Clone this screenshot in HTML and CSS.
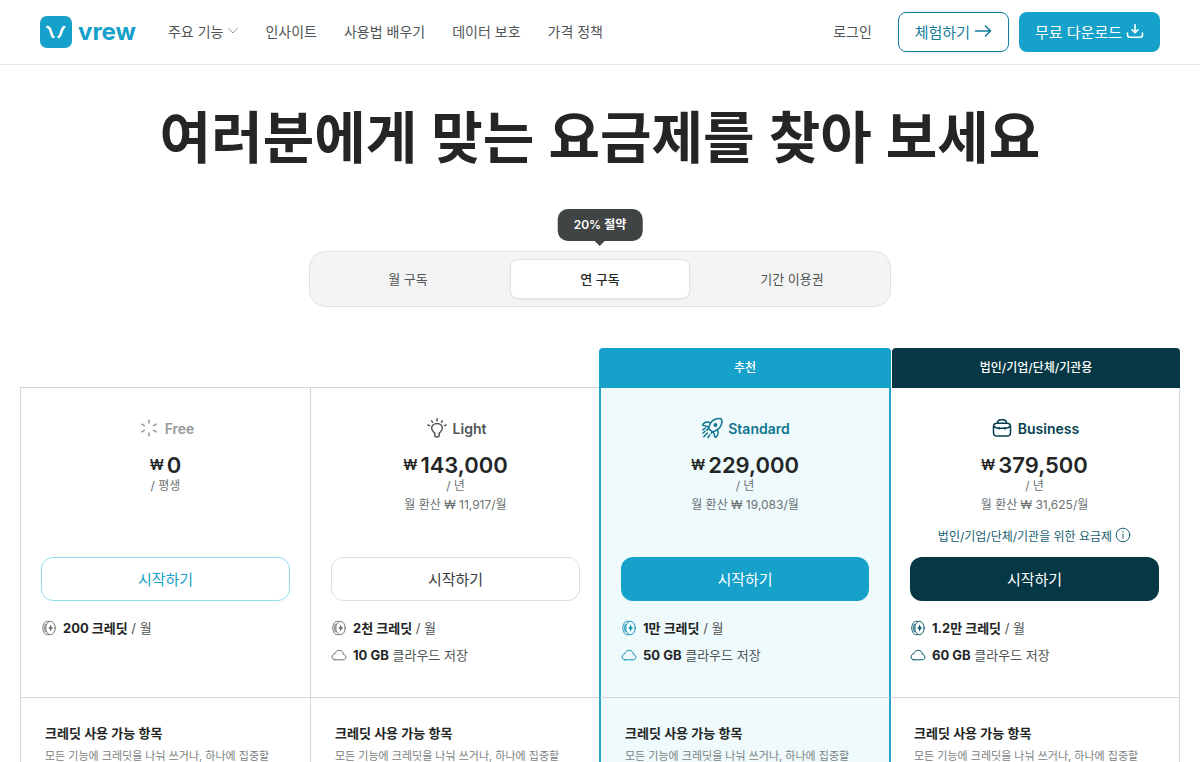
FILE: index.html
```html
<!DOCTYPE html>
<html lang="ko">
<head>
    <meta charset="UTF-8">
    <meta name="viewport" content="width=device-width, initial-scale=1">
    <title>Vrew 가격 정책</title>
    <link rel="stylesheet" href="styles.css">
</head>
<body>
<!-- 공용 아이콘 -->
<svg class="defs" width="0" height="0">
    <symbol id="coin" viewBox="0 0 16 16">
        <ellipse cx="9.500" cy="8" rx="4.700" ry="6.700"/>
        <path d="M7.500 1.300H6.500C3.900 1.300 1.800 4.300 1.800 8s2.100 6.700 4.700 6.700h1M4.200 4.300c-.7 2.200-.7 5.200 0 7.400"/>
        <path class="fill" d="M9.700 4.300l.9 2.700 1.700 1-1.700 1-.9 2.700L8.800 9l-1.700-1 1.700-1z"/>
    </symbol>
    <symbol id="cloud" viewBox="0 0 16 16">
        <path d="M3.900 12.800h8.300c1.500 0 2.700-1.100 2.700-2.600 0-1.400-1-2.500-2.400-2.600C12.300 5 10.500 3.300 8.200 3.300 6 3.300 4.300 4.700 3.800 6.900 2.200 7 1.100 8.300 1.100 9.900c0 1.700 1.200 2.900 2.800 2.900z"/>
    </symbol>
</svg>

<!-- 헤더 -->
<header class="header">
    <a class="logo" href="#">
        <svg width="32" height="32" viewBox="0 0 32 32">
            <rect width="32" height="32" rx="7" fill="#15a1c9"/>
            <path d="M7.500 11c2.300.2 2.900 2.800 3.600 5.200.6 2.200 1 4.300 2.400 4.800M24.300 11c-1.700.6-2.400 3.200-3.100 5.300-.6 2-1.200 4-2.400 4.700" fill="none" stroke="#fff" stroke-width="2.600" stroke-linecap="round"/>
        </svg>
        <span>vrew</span>
    </a>
    <nav class="nav">
        <a href="#">주요 기능
            <svg width="10" height="10" viewBox="0 0 10 10"><path d="M.8 2.500L5 7l4.200-4.500"/></svg>
        </a>
        <a href="#">인사이트</a>
        <a href="#">사용법 배우기</a>
        <a href="#">데이터 보호</a>
        <a href="#">가격 정책</a>
    </nav>
    <div class="actions">
        <a class="login" href="#">로그인</a>
        <button class="btn-try">체험하기
            <svg width="18" height="18" viewBox="0 0 18 18"><path d="M1.500 9h15M11.500 4l5 5-5 5"/></svg>
        </button>
        <button class="btn-down">무료 다운로드
            <svg width="18" height="18" viewBox="0 0 18 18"><path d="M9 2.500v8M6 7.700l3 3 3-3M1.500 11v1.800c0 1.500.9 2.400 2.400 2.400h10.200c1.500 0 2.400-.9 2.400-2.400V11"/></svg>
        </button>
    </div>
</header>

<main>
    <h1>여러분에게 맞는 요금제를 찾아 보세요</h1>

    <!-- 구독 기간 선택 -->
    <div class="period">
        <button>월 구독</button>
        <button class="on">연 구독</button>
        <button>기간 이용권</button>
        <span class="tip">20% 절약</span>
    </div>

    <!-- 요금제 -->
    <div class="plans">
        <article class="plan free">
            <div class="ribbon"></div>
            <section class="top">
                <h2>
                    <svg width="24" height="24" viewBox="0 0 24 24"><path d="M12 4v3M12 17v3M4.800 8.200l2.600 1.500M16.600 14.300l2.600 1.500M4.800 15.800l2.600-1.500M16.600 9.700l2.600-1.500"/></svg>
                    Free
                </h2>
                <div class="cost">
                    <p class="price"><small>₩</small>0</p>
                    <p class="unit">/ 평생</p>
                </div>
                <button class="start">시작하기</button>
                <ul>
                    <li><svg width="16" height="16"><use href="#coin"/></svg><span><b>200 크레딧</b> / 월</span></li>
                </ul>
            </section>
            <section class="bottom">
                <h3>크레딧 사용 가능 항목</h3>
                <p>모든 기능에 크레딧을 나눠 쓰거나, 하나에 집중할</p>
            </section>
        </article>

        <article class="plan light">
            <div class="ribbon"></div>
            <section class="top">
                <h2>
                    <svg width="24" height="24" viewBox="0 0 24 24"><path d="M9.800 18c0-2-3.100-2.300-3.100-5.700 0-2.800 2.300-4.900 5.300-4.900s5.300 2.100 5.300 4.900c0 3.400-3.100 3.700-3.100 5.700M9.800 17v2.500c0 .9.500 1.400 1.400 1.400h1.600c.9 0 1.400-.5 1.400-1.400V17M12 2.700v2M6.600 4.800l1 1.500M17.400 4.800l-1 1.500M2.900 9l1.700.6M21.100 9l-1.700.6"/></svg>
                    Light
                </h2>
                <div class="cost">
                    <p class="price"><small>₩</small>143,000</p>
                    <p class="unit">/ 년</p>
                    <p class="monthly">월 환산 ₩ 11,917/월</p>
                </div>
                <button class="start">시작하기</button>
                <ul>
                    <li><svg width="16" height="16"><use href="#coin"/></svg><span><b>2천 크레딧</b> / 월</span></li>
                    <li><svg width="16" height="16"><use href="#cloud"/></svg><span><b>10 GB</b> 클라우드 저장</span></li>
                </ul>
            </section>
            <section class="bottom">
                <h3>크레딧 사용 가능 항목</h3>
                <p>모든 기능에 크레딧을 나눠 쓰거나, 하나에 집중할</p>
            </section>
        </article>

        <article class="plan standard">
            <div class="ribbon">추천</div>
            <section class="top">
                <h2>
                    <svg width="24" height="24" viewBox="0 0 24 24"><path d="M8.500 12.500C9.400 8 12.500 3.700 16.500 2.700c2.300-.5 4.200-.2 4.800.4s.8 2.400.3 4.500c-1 4.200-4.600 7.200-9.100 8.300zM8.500 12.500L6.800 14.300M12.500 15.900l-1.300 1.300M10.600 7.200C8 5.500 5.200 5.900 3 8c-.6.600-.4 1.200.3 1.400l5.200 1.600M17 13.400c1.700 2.600 1.300 5.400-.8 7.600-.6.600-1.200.4-1.400-.3l-1.500-5M5 15.200l-2 1.800M7.400 17l-3.600 3.800M9.700 19l-1.700 2.500M5.500 12l-2.700 1.800"/><circle class="fill" cx="15.400" cy="9" r="1.900"/></svg>
                    Standard
                </h2>
                <div class="cost">
                    <p class="price"><small>₩</small>229,000</p>
                    <p class="unit">/ 년</p>
                    <p class="monthly">월 환산 ₩ 19,083/월</p>
                </div>
                <button class="start">시작하기</button>
                <ul>
                    <li><svg width="16" height="16"><use href="#coin"/></svg><span><b>1만 크레딧</b> / 월</span></li>
                    <li><svg width="16" height="16"><use href="#cloud"/></svg><span><b>50 GB</b> 클라우드 저장</span></li>
                </ul>
            </section>
            <section class="bottom">
                <h3>크레딧 사용 가능 항목</h3>
                <p>모든 기능에 크레딧을 나눠 쓰거나, 하나에 집중할</p>
            </section>
        </article>

        <article class="plan business">
            <div class="ribbon">법인/기업/단체/기관용</div>
            <section class="top">
                <h2>
                    <svg width="24" height="24" viewBox="0 0 24 24"><path d="M7 7.200h10c2.200 0 3.500 1.300 3.500 3.300v6.200c0 2-1.300 3.300-3.500 3.300H7c-2.200 0-3.500-1.300-3.500-3.300v-6.200c0-2 1.300-3.300 3.500-3.300zM7.200 7c.5-2.200 1.800-3.200 3.600-3.200h2.400c1.800 0 3.100 1 3.600 3.200M3.800 10c1.200 1.700 2.700 2.300 5.200 2.300h6c2.500 0 4-.6 5.200-2.300M9 11.500v1.600M15 11.500v1.600"/></svg>
                    Business
                </h2>
                <div class="cost">
                    <p class="price"><small>₩</small>379,500</p>
                    <p class="unit">/ 년</p>
                    <p class="monthly">월 환산 ₩ 31,625/월</p>
                    <p class="note">법인/기업/단체/기관을 위한 요금제
                        <svg width="16" height="16" viewBox="0 0 16 16"><circle cx="8" cy="8" r="6.800"/><path d="M8 7.200v4M8 4.600v.6"/></svg>
                    </p>
                </div>
                <button class="start">시작하기</button>
                <ul>
                    <li><svg width="16" height="16"><use href="#coin"/></svg><span><b>1.2만 크레딧</b> / 월</span></li>
                    <li><svg width="16" height="16"><use href="#cloud"/></svg><span><b>60 GB</b> 클라우드 저장</span></li>
                </ul>
            </section>
            <section class="bottom">
                <h3>크레딧 사용 가능 항목</h3>
                <p>모든 기능에 크레딧을 나눠 쓰거나, 하나에 집중할</p>
            </section>
        </article>
    </div>
</main>
</body>
</html>
```
FILE: styles.css
```css
*{
    box-sizing: border-box;
    margin: 0;
    padding: 0;
}
body{
    font-family: Inter, "Noto Sans CJK KR", sans-serif;
    font-size: 14px;
    color: #505454;
    background: #fff;
}
a{
    color: inherit;
    text-decoration: none;
}
button{
    font: inherit;
    color: inherit;
    border: none;
    background: none;
    cursor: pointer;
}
ul{
    list-style: none;
}
svg{
    flex: none;
    fill: none;
    stroke: currentColor;
    stroke-linecap: round;
    stroke-linejoin: round;
}
.defs{
    position: absolute;
}
/* 헤더 */
.header{
    display: flex;
    align-items: center;
    height: 65px;
    padding: 0 40px;
    border-bottom: 1px solid #e6e8e8;
}
.logo{
    display: flex;
    align-items: center;
    gap: 6px;
    color: #15a1c9;
    font-size: 24px;
    font-weight: 700;
    line-height: 30px;
}
.logo svg{
    stroke: none;
}
.nav{
    display: flex;
    gap: 27px;
    margin-left: 32px;
    padding-bottom: 2px;
}
.nav a{
    display: flex;
    align-items: center;
    gap: 5px;
    white-space: nowrap;
}
.nav svg{
    color: #969a9a;
}
.actions{
    display: flex;
    align-items: center;
    gap: 10px;
    margin-left: auto;
}
.login{
    margin-right: 16px;
    padding-bottom: 2px;
}
.actions button{
    display: flex;
    align-items: center;
    gap: 4px;
    height: 40px;
    padding: 0 16px 2px;
    border-radius: 8px;
    font-size: 15px;
    white-space: nowrap;
}
.actions svg{
    stroke-width: 1.6;
}
.actions .btn-try{
    border: 1px solid #147c9c;
    color: #147c9c;
}
.actions .btn-down{
    background: #15a1c9;
    color: #fff;
}
h1{
    margin-top: 38px;
    color: #242626;
    font-size: 56px;
    font-weight: 600;
    line-height: 70px;
    text-align: center;
}
/* 구독 기간 선택 */
.period{
    position: relative;
    display: grid;
    grid-template-columns: repeat(3, 1fr);
    gap: 12px;
    max-width: 582px;
    margin: 78px auto 0;
    padding: 7px 8px;
    border: 1px solid #dfe1e1;
    border-radius: 16px;
    background: #f4f4f4;
}
.period button{
    height: 40px;
    padding-bottom: 2px;
    border-radius: 8px;
    font-size: 13px;
}
.period .on{
    border: 1px solid #e0e3e3;
    background: #fff;
    color: #242626;
    font-weight: 500;
    box-shadow: 0 1px 2px rgba(0, 0, 0, .06);
}
.tip{
    position: absolute;
    left: 50%;
    bottom: 65px;
    transform: translateX(-50%);
    padding: 0 16px;
    border-radius: 10px;
    background: #404444;
    color: #fff;
    font-size: 12px;
    font-weight: 600;
    line-height: 32px;
    white-space: nowrap;
}
.tip::after{
    content: "";
    position: absolute;
    left: 50%;
    top: 100%;
    margin-left: -5px;
    border: 5px solid transparent;
    border-top-color: #404444;
}
/* 요금제 */
.plans{
    display: grid;
    grid-template-columns: repeat(4, minmax(0, 1fr));
    grid-template-rows: 40px auto auto;
    margin: 41px 20px 0;
}
.plan{
    display: grid;
    grid-row: span 3;
    grid-template-rows: subgrid;
    grid-template-columns: minmax(0, 1fr);
}
.ribbon{
    border-bottom: 1px solid #d5d8d8;
    color: #fff;
    font-size: 12px;
    font-weight: 500;
    line-height: 40px;
    text-align: center;
}
.standard .ribbon{
    border: none;
    border-radius: 4px 4px 0 0;
    background: #15a1c9;
}
.business .ribbon{
    margin-left: 2px;
    border: none;
    border-radius: 4px 4px 0 0;
    background: #053744;
}
.top,.bottom{
    border-left: 1px solid #d5d8d8;
}
.top{
    padding: 28px 20px;
    border-bottom: 1px solid #d5d8d8;
}
.bottom{
    padding: 24px;
}
.standard{
    z-index: 1;
    margin: 0 -1px;
}
.standard .top,.standard .bottom{
    border-left: 2px solid #27a3c4;
    border-right: 2px solid #27a3c4;
    background: #effafd;
}
.business .top,.business .bottom{
    border-left: none;
    border-right: 1px solid #d5d8d8;
}
.plan h2{
    display: flex;
    justify-content: center;
    align-items: center;
    gap: 4px;
    height: 24px;
    font-size: 14px;
    font-weight: 600;
}
.plan h2 svg{
    stroke-width: 1.5;
}
.free h2{
    color: #969a9a;
}
.standard h2{
    color: #0f7590;
}
.business h2{
    color: #053f4e;
}
/* 가격 */
.cost{
    min-height: 105px;
    margin-top: 12px;
    color: #6c7171;
    font-size: 12px;
    text-align: center;
}
.price{
    display: flex;
    justify-content: center;
    align-items: center;
    gap: 3px;
    color: #242626;
    font-size: 22px;
    font-weight: 600;
    line-height: 26px;
}
.price small{
    font-size: 14px;
}
.unit{
    line-height: 15px;
}
.monthly{
    line-height: 24px;
}
.note{
    display: flex;
    justify-content: center;
    align-items: center;
    gap: 3px;
    height: 24px;
    margin-top: 6px;
    color: #155e70;
    white-space: nowrap;
}
.start{
    display: block;
    width: 100%;
    height: 44px;
    padding-bottom: 2px;
    border: 1px solid #dcdfdf;
    border-radius: 12px;
    color: #383c3c;
    font-size: 15px;
}
.free .start{
    border-color: #93dcee;
    color: #15a1c9;
}
.standard .start{
    border: none;
    background: #15a1c9;
    color: #fff;
}
.business .start{
    border: none;
    background: #053744;
    color: #fff;
}
.top ul{
    margin-top: 13px;
    margin-bottom: 1px;
    font-size: 13px;
}
.top li{
    display: flex;
    align-items: center;
    gap: 6px;
    height: 27px;
    white-space: nowrap;
}
.top li b{
    color: #242626;
}
.top li svg{
    color: #6c7171;
}
.standard li svg{
    color: #128db0;
}
.business li svg{
    color: #05566b;
}
.fill{
    fill: currentColor;
    stroke: none;
}
/* 크레딧 사용 가능 항목 */
.bottom h3{
    color: #242626;
    font-size: 13px;
    font-weight: 600;
    line-height: 22px;
}
.bottom p{
    color: #7c8181;
    font-size: 11px;
    line-height: 24px;
    white-space: nowrap;
}
```
